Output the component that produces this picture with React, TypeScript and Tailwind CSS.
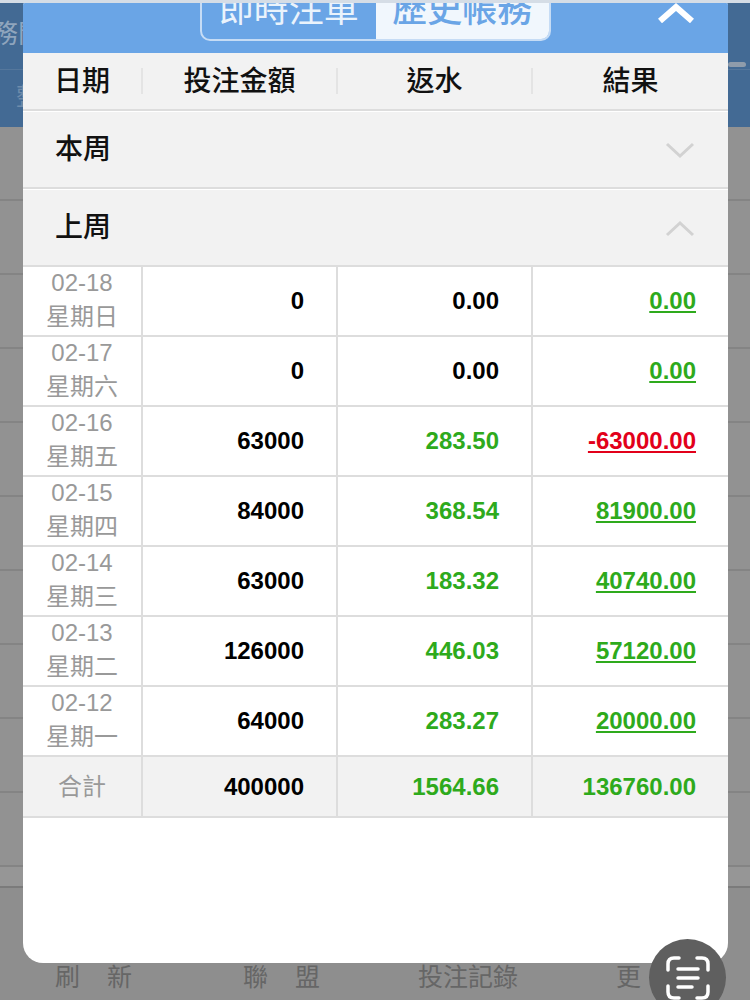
import React from 'react';

const FONT = "font-['Liberation_Sans','Noto_Sans_CJK_TC',sans-serif]";

interface DayRow {
    date: string;
    weekday: string;
    amount: string;
    rebate: string;
    result: string;
}

const days: DayRow[] = [
    { date: '02-18', weekday: '星期日', amount: '0', rebate: '0.00', result: '0.00' },
    { date: '02-17', weekday: '星期六', amount: '0', rebate: '0.00', result: '0.00' },
    { date: '02-16', weekday: '星期五', amount: '63000', rebate: '283.50', result: '-63000.00' },
    { date: '02-15', weekday: '星期四', amount: '84000', rebate: '368.54', result: '81900.00' },
    { date: '02-14', weekday: '星期三', amount: '63000', rebate: '183.32', result: '40740.00' },
    { date: '02-13', weekday: '星期二', amount: '126000', rebate: '446.03', result: '57120.00' },
    { date: '02-12', weekday: '星期一', amount: '64000', rebate: '283.27', result: '20000.00' },
];

const GRID = 'grid grid-cols-[120px_195px_195px_195px]';

const Backdrop: React.FC = () => (
    <div className="flex flex-col h-[1000px] bg-[#929292]">
        <div className="h-[127px] bg-[#436a94] flex flex-col">
            <div className="h-[70px] border-b border-[#55779c] overflow-hidden flex justify-between items-center pr-[4px]">
                <span className="text-[26px] text-[#8fa5bd] -ml-[8px] whitespace-nowrap">務開</span>
                <span className="w-[18px] h-[5px] bg-[#8f9cab] rounded-sm mt-[60px]" />
            </div>
            <span className="text-[24px] text-[#6f8cab] pl-[16px] leading-[54px]">整</span>
        </div>
        {[0, 1, 2, 3, 4, 5, 6, 7, 8, 9].map(i => (
            <div key={i} className="h-[74px] shrink-0 border-b-2 border-[#848484]" />
        ))}
        <div className="h-[21px] shrink-0 border-b-2 border-[#7b7b7b] bg-[#969696]" />
        <div className="flex-1 bg-[#8e8e8e] relative">
            <div className="absolute top-[73px] left-0 right-0 text-[25px] text-[#666666] leading-[32px] flex">
                <span className="ml-[55px] w-[77px] flex justify-between">
                    <span>刷</span>
                    <span>新</span>
                </span>
                <span className="ml-[111px] w-[77px] flex justify-between">
                    <span>聯</span>
                    <span>盟</span>
                </span>
                <span className="ml-[98px]">投注記錄</span>
                <span className="ml-[98px]">更</span>
            </div>
        </div>
    </div>
);

const Section: React.FC<{ title: string; open?: boolean }> = ({ title, open }) => (
    <div className="h-[77px] shrink-0 bg-[#f2f2f2] border-b-2 border-[#dddddd] flex items-center justify-between pl-[32px] pr-[33px]">
        <span className="text-[28px] font-medium text-[#111111]">{title}</span>
        <svg width="30" height="18" viewBox="0 0 30 18" fill="none" stroke="#d2d2d2" strokeWidth="3">
            <path d={open ? 'M2 16 L15 4 L28 16' : 'M2 3 L15 15 L28 3'} />
        </svg>
    </div>
);

const Modal: React.FC = () => (
    <div className="absolute top-[3px] left-[23px] w-[705px] h-[960px] bg-white rounded-b-[20px] rounded-t-[2px] overflow-hidden flex flex-col">
        <div className="h-[50px] shrink-0 bg-[#6aa5e6] relative">
            <div className="absolute left-[177px] top-[-20px] w-[351px] h-[58px] rounded-[10px] border-2 border-[#c6dcf5] flex overflow-hidden text-[35px]">
                <div className="w-1/2 pb-[4px] flex items-center justify-center text-[#eaf3fc] whitespace-nowrap">即時注單</div>
                <div className="w-1/2 pb-[4px] flex items-center justify-center bg-[#f1f7fd] text-[#6aa5e6] font-medium whitespace-nowrap">歷史帳務</div>
            </div>
            <svg className="absolute left-[634px] top-0" width="38" height="20" viewBox="0 0 38 20" fill="none" stroke="#ffffff" strokeWidth="6">
                <path d="M3 18 L19 4 L35 18" />
            </svg>
        </div>

        <div className={`${GRID} h-[58px] shrink-0 bg-[#f2f2f2] border-b-2 border-[#dddddd] items-center text-center text-[28px] font-medium text-[#111111]`}>
            <div className="h-[26px] leading-[28px] border-r-2 border-[#e4e4e4]">日期</div>
            <div className="h-[26px] leading-[28px] border-r-2 border-[#e4e4e4]">投注金額</div>
            <div className="h-[26px] leading-[28px] border-r-2 border-[#e4e4e4]">返水</div>
            <div className="h-[26px] leading-[28px]">結果</div>
        </div>

        <div className="h-px shrink-0" />
        <Section title="本周" />
        <div className="h-px shrink-0" />
        <Section title="上周" open />

        {days.map(d => (
            <div key={d.date} className={`${GRID} h-[70px] shrink-0 border-b-2 border-[#dddddd] text-[24px] font-bold text-right`}>
                <div className="border-r-2 border-[#dddddd] text-center font-normal text-[#999999] leading-[34px]">
                    <div className="-mt-px">{d.date}</div>
                    <div>{d.weekday}</div>
                </div>
                <div className="border-r-2 border-[#dddddd] pr-[32px] leading-[68px] text-black">{d.amount}</div>
                <div className={`border-r-2 border-[#dddddd] pr-[32px] leading-[68px] ${d.amount === '0' ? 'text-black' : 'text-[#2eaa1c]'}`}>{d.rebate}</div>
                <div className={`pr-[32px] leading-[68px] underline underline-offset-2 ${d.result.startsWith('-') ? 'text-[#e2001a]' : 'text-[#2eaa1c]'}`}>{d.result}</div>
            </div>
        ))}

        <div className={`${GRID} h-[61px] shrink-0 bg-[#f2f2f2] border-b-2 border-[#dddddd] text-[24px] font-bold text-right leading-[59px]`}>
            <div className="border-r-2 border-[#dddddd] text-center font-normal text-[#999999]">合計</div>
            <div className="border-r-2 border-[#dddddd] pr-[32px] text-black">400000</div>
            <div className="border-r-2 border-[#dddddd] pr-[32px] text-[#2eaa1c]">1564.66</div>
            <div className="pr-[32px] text-[#2eaa1c]">136760.00</div>
        </div>
    </div>
);

const ScanButton: React.FC = () => (
    <div className="absolute left-[649px] top-[939px] w-[77px] h-[77px] rounded-full bg-[#5f5f5f] flex items-center justify-center">
        <svg width="44" height="44" viewBox="0 0 44 44" fill="none" stroke="#ffffff" strokeWidth="3.5" strokeLinecap="round">
            <path d="M2 14 V8 Q2 2 8 2 H13" />
            <path d="M31 2 H36 Q42 2 42 8 V14" />
            <path d="M2 30 V36 Q2 42 8 42 H13" />
            <path d="M31 42 H36 Q42 42 42 36 V30" />
            <path d="M12 13 H32" />
            <path d="M12 22 H32" />
            <path d="M12 31 H26" />
        </svg>
    </div>
);

export default function App() {
    return (
        <div className={`relative w-[750px] h-[1000px] overflow-hidden ${FONT}`}>
            <Backdrop />
            <div className="absolute top-0 left-0 right-0 h-[3px] bg-[#d5dde6]" />
            <Modal />
            <ScanButton />
        </div>
    );
}
